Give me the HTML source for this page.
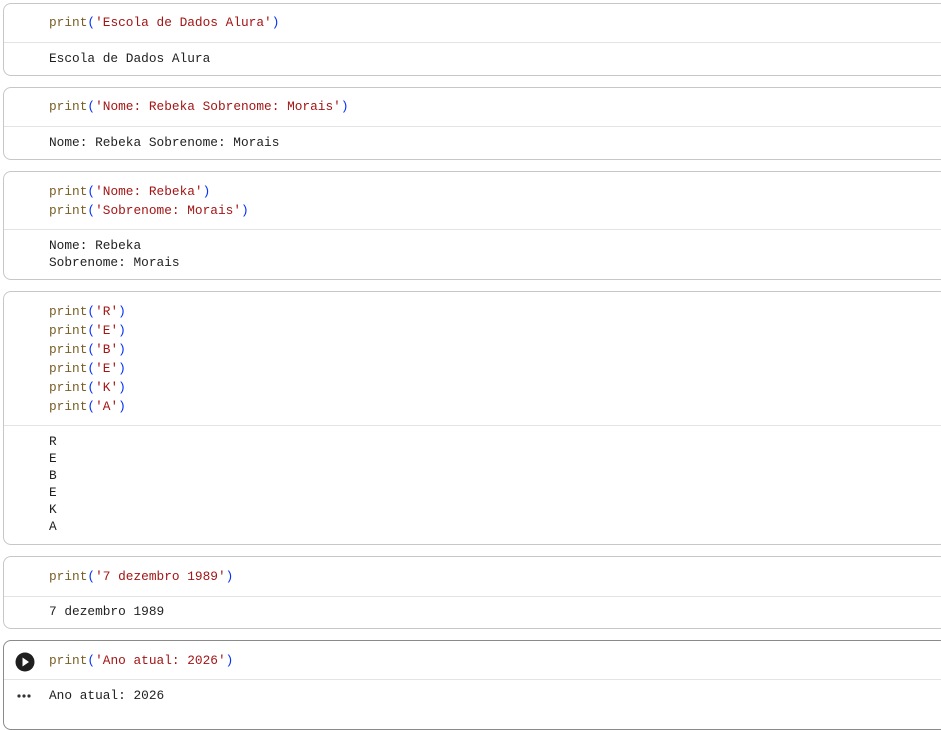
<!DOCTYPE html>
<html><head><meta charset="utf-8"><style>
body{margin:0;width:941px;height:708px;overflow:hidden;background:#fff;font-family:"Liberation Mono",monospace;font-size:12.8px;}
.c{position:absolute;left:3px;width:945px;border:1px solid #c7c7c7;border-radius:8px;box-sizing:border-box}
.sep{position:absolute;left:0;right:0;height:1px;background:#e3e3e3}
.l{position:absolute;left:45px;white-space:pre;line-height:17px;color:#1f1f1f}
.f{color:#795e26}.p{color:#0431fa}.s{color:#a31515}
</style></head><body>

<div class="c" style="top:3px;height:73px">
<div class="l" style="top:10px"><span class="f">print</span><span class="p">(</span><span class="s">'Escola de Dados Alura'</span><span class="p">)</span></div>
<div class="sep" style="top:38px"></div>
<div class="l" style="top:46px">Escola de Dados Alura</div>
</div>

<div class="c" style="top:87px;height:73px">
<div class="l" style="top:10px"><span class="f">print</span><span class="p">(</span><span class="s">'Nome: Rebeka Sobrenome: Morais'</span><span class="p">)</span></div>
<div class="sep" style="top:38px"></div>
<div class="l" style="top:46px">Nome: Rebeka Sobrenome: Morais</div>
</div>

<div class="c" style="top:171px;height:109px">
<div class="l" style="top:10px;line-height:19px"><span class="f">print</span><span class="p">(</span><span class="s">'Nome: Rebeka'</span><span class="p">)</span>
<span class="f">print</span><span class="p">(</span><span class="s">'Sobrenome: Morais'</span><span class="p">)</span></div>
<div class="sep" style="top:57px"></div>
<div class="l" style="top:65px">Nome: Rebeka
Sobrenome: Morais</div>
</div>

<div class="c" style="top:291px;height:254px">
<div class="l" style="top:10px;line-height:19px"><span class="f">print</span><span class="p">(</span><span class="s">'R'</span><span class="p">)</span>
<span class="f">print</span><span class="p">(</span><span class="s">'E'</span><span class="p">)</span>
<span class="f">print</span><span class="p">(</span><span class="s">'B'</span><span class="p">)</span>
<span class="f">print</span><span class="p">(</span><span class="s">'E'</span><span class="p">)</span>
<span class="f">print</span><span class="p">(</span><span class="s">'K'</span><span class="p">)</span>
<span class="f">print</span><span class="p">(</span><span class="s">'A'</span><span class="p">)</span></div>
<div class="sep" style="top:133px"></div>
<div class="l" style="top:141px">R
E
B
E
K
A</div>
</div>

<div class="c" style="top:556px;height:73px">
<div class="l" style="top:11px"><span class="f">print</span><span class="p">(</span><span class="s">'7 dezembro 1989'</span><span class="p">)</span></div>
<div class="sep" style="top:39px"></div>
<div class="l" style="top:46px">7 dezembro 1989</div>
</div>

<div class="c" style="top:640px;height:90px;border-color:#8a8a8a">
<svg style="position:absolute;left:11px;top:11px" width="20" height="20" viewBox="0 0 20 20"><circle cx="10" cy="10" r="9.5" fill="#1f1f1f"/><path d="M7.5 5.5L14 10L7.5 14.5Z" fill="#fff"/></svg>
<div class="l" style="top:11px"><span class="f">print</span><span class="p">(</span><span class="s">'Ano atual: 2026'</span><span class="p">)</span></div>
<div class="sep" style="top:38px"></div>
<svg style="position:absolute;left:13px;top:53px" width="16" height="4"><circle cx="2" cy="2" r="1.6" fill="#333"/><circle cx="7" cy="2" r="1.6" fill="#333"/><circle cx="12" cy="2" r="1.6" fill="#333"/></svg>
<div class="l" style="top:46px">Ano atual: 2026</div>
</div>

</body></html>
